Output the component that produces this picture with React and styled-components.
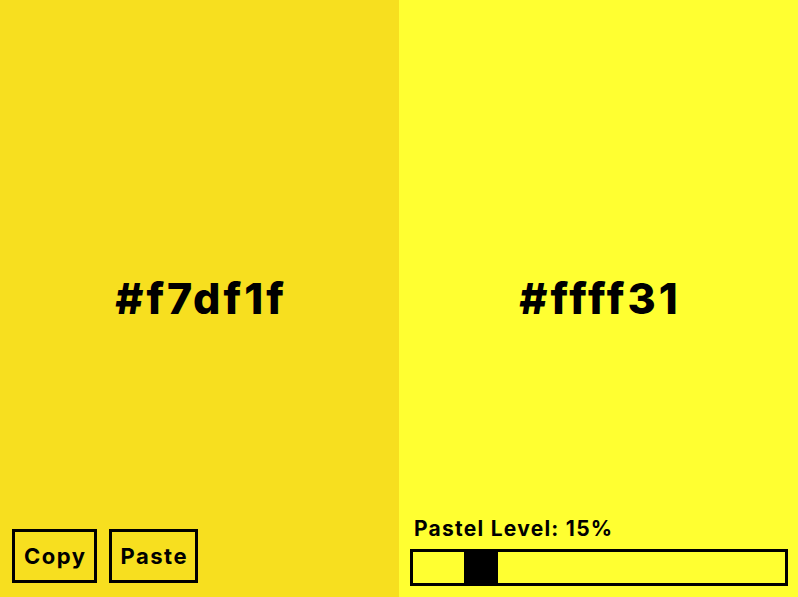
import React, { useState } from "react";
import styled, { createGlobalStyle } from "styled-components";

const GlobalStyle = createGlobalStyle`
  html, body {
    margin: 0;
    padding: 0;
    height: 100%;
  }
  #root {
    height: 100%;
  }
  body {
    font-family: Inter, "Open Sans", sans-serif;
    overflow: hidden;
  }
`;

const Page = styled.div`
  display: grid;
  grid-template-columns: 399px 399px;
  height: 597px;
  width: 798px;
`;

const Panel = styled.div`
  background-color: ${(p) => p.$color};
  display: grid;
  grid-template-rows: 1fr auto 1fr;
  min-height: 0;
`;

const HexLabel = styled.div`
  grid-row: 2;
  text-align: center;
  font-size: 43px;
  font-weight: 800;
  letter-spacing: 3px;
  text-indent: 3px;
  color: #000;
  line-height: 1;
`;

const Controls = styled.div`
  grid-row: 3;
  align-self: end;
  display: flex;
  gap: 12px;
  padding: 0 12px 14px;
`;

const ActionButton = styled.button`
  box-sizing: border-box;
  height: 54px;
  padding: 0 8px 0 9px;
  border: 3px solid #000;
  background: transparent;
  font-family: Inter, sans-serif;
  font-size: 22px;
  font-weight: 700;
  letter-spacing: 1.5px;
  color: #000;
  cursor: pointer;

  & + & {
    padding: 0 7px 0 8px;
  }
`;

const SliderWrap = styled.div`
  grid-row: 3;
  align-self: end;
  display: flex;
  flex-direction: column;
  gap: 8px;
  padding: 0 10px 11px 11px;
`;

const SliderLabel = styled.div`
  padding-left: 4px;
  font-size: 21px;
  font-weight: 700;
  letter-spacing: 1.25px;
  color: #000;
`;

const Track = styled.div`
  box-sizing: border-box;
  position: relative;
  height: 37px;
  border: 3px solid #000;
`;

const Thumb = styled.div`
  position: absolute;
  top: 0;
  bottom: 0;
  width: 34px;
  background: #000;
`;

export default function App() {
  const [level] = useState(15);
  const innerWidth = 371;
  const thumbLeft = Math.round((innerWidth - 34) * (level / 100));

  return (
    <>
      <GlobalStyle />
      <Page>
        <Panel $color="#f7df1f">
          <HexLabel>#f7df1f</HexLabel>
          <Controls>
            <ActionButton>Copy</ActionButton>
            <ActionButton>Paste</ActionButton>
          </Controls>
        </Panel>
        <Panel $color="#ffff31">
          <HexLabel>#ffff31</HexLabel>
          <SliderWrap>
            <SliderLabel>Pastel Level: {level}%</SliderLabel>
            <Track>
              <Thumb style={{ left: thumbLeft }} />
            </Track>
          </SliderWrap>
        </Panel>
      </Page>
    </>
  );
}
